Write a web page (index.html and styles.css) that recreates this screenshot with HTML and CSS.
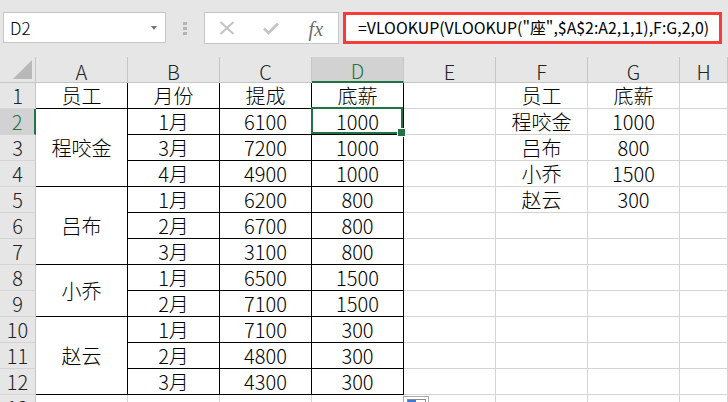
FILE: index.html
```html
<!DOCTYPE html>
<html lang="zh-CN">
<head>
    <meta charset="UTF-8">
    <meta name="viewport" content="width=device-width, initial-scale=1.0">
    <title>VLOOKUP 底薪</title>
    <link rel="stylesheet" href="styles.css">
</head>
<body>
    <div class="bar">
        <div class="namebox"><span>D2</span><span class="caret"></span></div>
        <div class="grip"><i></i><i></i><i></i></div>
        <div class="fbtns">
            <span class="fbtn">
                <svg width="16" height="14" viewBox="0 0 16 14"><path d="M1.5 1 L14.5 13 M14.5 1 L1.5 13" stroke="#c4c4c4" stroke-width="2" fill="none"/></svg>
            </span>
            <span class="fbtn">
                <svg width="16" height="13" viewBox="0 0 16 13"><path d="M1 6.5 L5.5 11 L15 1.5" stroke="#c4c4c4" stroke-width="2.6" fill="none"/></svg>
            </span>
            <span class="fbtn fx">fx</span>
        </div>
        <div class="formula">=VLOOKUP(VLOOKUP("座",$A$2:A2,1,1),F:G,2,0)</div>
    </div>

    <div class="sheet">
        <div class="corner"><svg width="36" height="26" viewBox="0 0 36 26"><polygon points="13,22 32,22 32,3" fill="#b8b8b8"/></svg></div>
        <div class="hd">A</div>
        <div class="hd">B</div>
        <div class="hd">C</div>
        <div class="hd on">D</div>
        <div class="hd">E</div>
        <div class="hd">F</div>
        <div class="hd">G</div>
        <div class="hd">H</div>

        <div class="rh">1</div>
        <div class="c t">员工</div>
        <div class="c t">月份</div>
        <div class="c t">提成</div>
        <div class="c t">底薪</div>
        <div class="c"></div>
        <div class="c">员工</div>
        <div class="c">底薪</div>
        <div class="c"></div>

        <div class="rh on">2</div>
        <div class="c t m3">程咬金</div>
        <div class="c t">1月</div>
        <div class="c t">6100</div>
        <div class="c t sel">1000</div>
        <div class="c"></div>
        <div class="c">程咬金</div>
        <div class="c">1000</div>
        <div class="c"></div>

        <div class="rh">3</div>
        <div class="c t">3月</div>
        <div class="c t">7200</div>
        <div class="c t">1000</div>
        <div class="c"></div>
        <div class="c">吕布</div>
        <div class="c">800</div>
        <div class="c"></div>

        <div class="rh">4</div>
        <div class="c t">4月</div>
        <div class="c t">4900</div>
        <div class="c t">1000</div>
        <div class="c"></div>
        <div class="c">小乔</div>
        <div class="c">1500</div>
        <div class="c"></div>

        <div class="rh">5</div>
        <div class="c t m3">吕布</div>
        <div class="c t">1月</div>
        <div class="c t">6200</div>
        <div class="c t">800</div>
        <div class="c"></div>
        <div class="c">赵云</div>
        <div class="c">300</div>
        <div class="c"></div>

        <div class="rh">6</div>
        <div class="c t">2月</div>
        <div class="c t">6700</div>
        <div class="c t">800</div>
        <div class="c"></div>
        <div class="c"></div>
        <div class="c"></div>
        <div class="c"></div>

        <div class="rh">7</div>
        <div class="c t">3月</div>
        <div class="c t">3100</div>
        <div class="c t">800</div>
        <div class="c"></div>
        <div class="c"></div>
        <div class="c"></div>
        <div class="c"></div>

        <div class="rh">8</div>
        <div class="c t m2">小乔</div>
        <div class="c t">1月</div>
        <div class="c t">6500</div>
        <div class="c t">1500</div>
        <div class="c"></div>
        <div class="c"></div>
        <div class="c"></div>
        <div class="c"></div>

        <div class="rh">9</div>
        <div class="c t">2月</div>
        <div class="c t">7100</div>
        <div class="c t">1500</div>
        <div class="c"></div>
        <div class="c"></div>
        <div class="c"></div>
        <div class="c"></div>

        <div class="rh">10</div>
        <div class="c t m3">赵云</div>
        <div class="c t">1月</div>
        <div class="c t">7100</div>
        <div class="c t">300</div>
        <div class="c"></div>
        <div class="c"></div>
        <div class="c"></div>
        <div class="c"></div>

        <div class="rh">11</div>
        <div class="c t">2月</div>
        <div class="c t">4800</div>
        <div class="c t">300</div>
        <div class="c"></div>
        <div class="c"></div>
        <div class="c"></div>
        <div class="c"></div>

        <div class="rh">12</div>
        <div class="c t">3月</div>
        <div class="c t">4300</div>
        <div class="c t">300</div>
        <div class="c"></div>
        <div class="c"></div>
        <div class="c"></div>
        <div class="c"></div>

        <div class="rh">13</div>
        <div class="c"></div>
        <div class="c"></div>
        <div class="c"></div>
        <div class="c"></div>
        <div class="c"></div>
        <div class="c"></div>
        <div class="c"></div>
        <div class="c"></div>

        <div class="paste"></div>
    </div>
</body>
</html>
```

FILE: styles.css
```css
* {
    margin: 0;
    padding: 0;
    box-sizing: border-box;
}

body {
    width: 728px;
    height: 402px;
    overflow: hidden;
    background: #e6e6e6;
    font-family: "Noto Sans CJK SC", sans-serif;
    font-weight: 300;
    color: #000;
}

/* formula bar */
.bar {
    height: 57px;
    padding-top: 12px;
    display: flex;
    align-items: flex-start;
}

.namebox {
    margin-left: 3px;
    width: 163px;
    height: 31px;
    background: #fff;
    border: 1px solid #c6c6c6;
    display: flex;
    align-items: center;
    justify-content: space-between;
    padding: 0 8px 0 6px;
    font-size: 17px;
    line-height: 18px;
}

.caret {
    border-left: 3px solid transparent;
    border-right: 3px solid transparent;
    border-top: 4px solid #777;
}

.grip {
    width: 38px;
    height: 33px;
    display: flex;
    flex-direction: column;
    align-items: center;
    justify-content: center;
    gap: 2px;
}

.grip i {
    width: 4px;
    height: 3px;
    background: #b4b4b4;
}

.fbtns {
    width: 135px;
    height: 32px;
    background: #fff;
    border: 1px solid #c6c6c6;
    display: flex;
}

.fbtn {
    width: 45px;
    display: flex;
    align-items: center;
    justify-content: center;
}

.fx {
    font-family: "Liberation Serif", serif;
    font-style: italic;
    font-size: 20px;
    line-height: 20px;
    color: #6b6b6b;
    padding-top: 1px;
}

.formula {
    margin-left: 4px;
    width: 379px;
    height: 32px;
    border: 3px solid #f73b3b;
    background: #fff;
    padding-left: 12px;
    display: flex;
    align-items: center;
    font-size: 15.9px;
    line-height: 18px;
    font-weight: 400;
    white-space: nowrap;
}

/* sheet grid */
.sheet {
    position: relative;
    display: grid;
    grid-template-columns: 36px repeat(7, 92px) 1fr;
    grid-auto-rows: 26px;
    background: #fff;
}

.corner,
.hd,
.rh {
    background: #e6e6e6;
    border-right: 1px solid #c6c6c6;
    border-bottom: 1px solid #c6c6c6;
    font-size: 20px;
    line-height: 20px;
    color: #222;
}

.hd {
    display: flex;
    align-items: center;
    justify-content: center;
    padding-top: 4px;
}

.rh {
    display: flex;
    align-items: center;
    justify-content: center;
    border-bottom-color: #d4d4d4;
}

.hd.on {
    background: #d2d2d2;
    border-bottom: 2px solid #217346;
    color: #217346;
}

.rh.on {
    background: #d2d2d2;
    border-right: 2px solid #217346;
    color: #217346;
}

.c {
    border-right: 1px solid #d4d4d4;
    border-bottom: 1px solid #d4d4d4;
    display: flex;
    align-items: center;
    justify-content: center;
    font-size: 20px;
    line-height: 20px;
    padding-top: 1px;
}

.c.t {
    border-color: #000;
}

.m3 {
    grid-row: span 3;
}

.m2 {
    grid-row: span 2;
}

.sel {
    position: relative;
    z-index: 1;
}

.sel::after {
    content: "";
    position: absolute;
    left: -1px;
    top: -2px;
    right: 0;
    bottom: 0;
    border: 2px solid #217346;
}

.sel::before {
    content: "";
    position: absolute;
    right: -3px;
    bottom: -3px;
    width: 7px;
    height: 7px;
    background: #217346;
    border: 1px solid #fff;
    z-index: 2;
}

.paste {
    position: absolute;
    left: 403px;
    top: 339px;
    width: 26px;
    height: 20px;
    border: 1px solid #a8a8a8;
    background: #fff;
}

.paste::before {
    content: "";
    position: absolute;
    left: 3px;
    top: 2px;
    width: 17px;
    height: 12px;
    border: 1px solid #888;
}

.paste::after {
    content: "";
    position: absolute;
    left: 4px;
    top: 3px;
    width: 8px;
    height: 4px;
    background: #3c78d8;
}
```
